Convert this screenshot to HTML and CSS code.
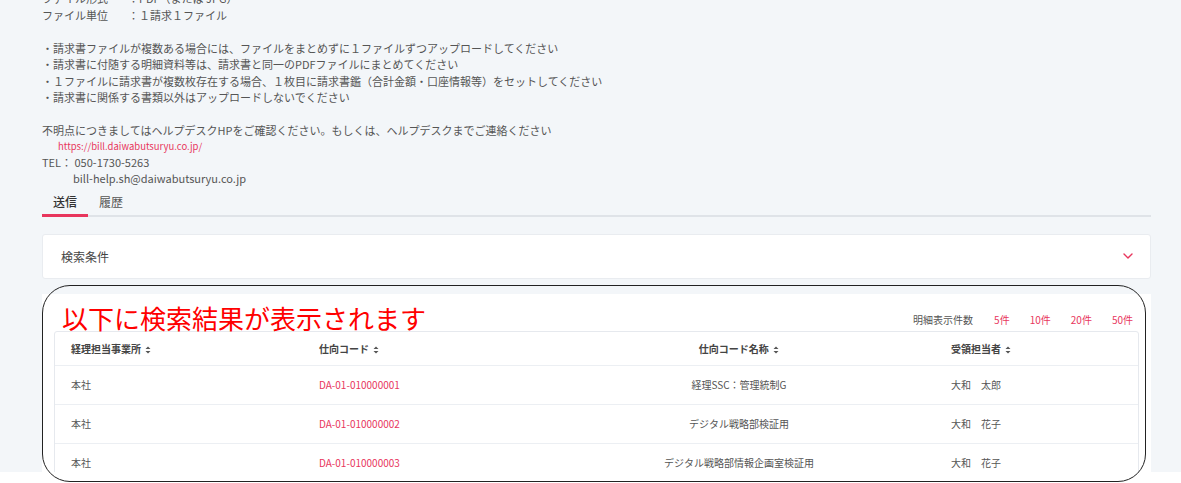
FILE: index.html
```html
<!DOCTYPE html>
<html lang="ja">
<head>
    <meta charset="UTF-8">
    <meta name="viewport" content="width=device-width, initial-scale=1.0">
    <title>請求書アップロード</title>
    <link rel="stylesheet" href="styles.css">
</head>
<body>
    <div class="page">
        <div class="content">
            <!-- Upload notes -->
            <div class="info">
                <div><span class="label">ファイル形式</span>：PDF（または JPG）</div>
                <div><span class="label">ファイル単位</span>：１請求１ファイル</div>
                <div class="blank"></div>
                <div>・請求書ファイルが複数ある場合には、ファイルをまとめずに１ファイルずつアップロードしてください</div>
                <div>・請求書に付随する明細資料等は、請求書と同一のPDFファイルにまとめてください</div>
                <div>・１ファイルに請求書が複数枚存在する場合、１枚目に請求書鑑（合計金額・口座情報等）をセットしてください</div>
                <div>・請求書に関係する書類以外はアップロードしないでください</div>
                <div class="blank"></div>
                <div>不明点につきましてはヘルプデスクHPをご確認ください。もしくは、ヘルプデスクまでご連絡ください</div>
                <div class="url">https://bill.daiwabutsuryu.co.jp/</div>
                <div class="tel">TEL： 050-1730-5263</div>
                <div class="mail">bill-help.sh@daiwabutsuryu.co.jp</div>
            </div>

            <!-- Tabs -->
            <div class="tabs">
                <div class="tab active">送信</div>
                <div class="tab">履歴</div>
            </div>

            <!-- Search conditions -->
            <div class="search-card">
                <span>検索条件</span>
                <svg class="chevron" width="10" height="6" viewBox="0 0 10 6"><path d="M1 1 L5 5 L9 1" fill="none" stroke="#e8365d" stroke-width="1.4" stroke-linecap="round" stroke-linejoin="round"/></svg>
            </div>

            <!-- Results -->
            <div class="results">
                <div class="results-top">
                    <div class="note">以下に検索結果が表示されます</div>
                    <div class="page-size">
                        <span class="ps-label">明細表示件数</span>
                        <span class="ps-opt">5件</span>
                        <span class="ps-opt">10件</span>
                        <span class="ps-opt">20件</span>
                        <span class="ps-opt">50件</span>
                    </div>
                </div>
                <div class="table">
                    <div class="row head">
                        <div class="cell c1">経理担当事業所 <svg class="sort" width="6" height="8" viewBox="0 0 6 8"><path d="M3 0.5 L5.5 3 H0.5 Z M3 7.5 L5.5 5 H0.5 Z" fill="#555"/></svg></div>
                        <div class="cell c2">仕向コード <svg class="sort" width="6" height="8" viewBox="0 0 6 8"><path d="M3 0.5 L5.5 3 H0.5 Z M3 7.5 L5.5 5 H0.5 Z" fill="#555"/></svg></div>
                        <div class="cell c3">仕向コード名称 <svg class="sort" width="6" height="8" viewBox="0 0 6 8"><path d="M3 0.5 L5.5 3 H0.5 Z M3 7.5 L5.5 5 H0.5 Z" fill="#555"/></svg></div>
                        <div class="cell c4">受領担当者 <svg class="sort" width="6" height="8" viewBox="0 0 6 8"><path d="M3 0.5 L5.5 3 H0.5 Z M3 7.5 L5.5 5 H0.5 Z" fill="#555"/></svg></div>
                    </div>
                    <div class="row">
                        <div class="cell c1">本社</div>
                        <div class="cell c2 code">DA-01-010000001</div>
                        <div class="cell c3">経理SSC：管理統制G</div>
                        <div class="cell c4">大和　太郎</div>
                    </div>
                    <div class="row">
                        <div class="cell c1">本社</div>
                        <div class="cell c2 code">DA-01-010000002</div>
                        <div class="cell c3">デジタル戦略部検証用</div>
                        <div class="cell c4">大和　花子</div>
                    </div>
                    <div class="row">
                        <div class="cell c1">本社</div>
                        <div class="cell c2 code">DA-01-010000003</div>
                        <div class="cell c3">デジタル戦略部情報企画室検証用</div>
                        <div class="cell c4">大和　花子</div>
                    </div>
                </div>
            </div>
        </div>
    </div>
    <!-- annotation outline drawn over the results -->
    <div class="annotation"></div>
</body>
</html>
```

FILE: styles.css
```css
body {
    margin: 0;
    padding: 0;
    background: #fff;
    font-family: "Noto Sans CJK JP", "Noto Sans", sans-serif;
    color: #555;
}
.page {
    height: 472px;
    overflow: hidden;
    background: #f3f6f9;
}
.content {
    padding: 0 30px 0 42px;
}
.info {
    margin-top: -10px;
    font-size: 11px;
    line-height: 16.5px;
}
.info .blank {
    height: 16.5px;
}
.info .label {
    display: inline-block;
    width: 86px;
}
.info .url {
    padding-left: 16px;
    font-size: 9.5px;
    line-height: 15px;
    color: #e8365d;
}
.info .tel {
    line-height: 16px;
}
.info .mail {
    padding-left: 31px;
    line-height: 17px;
}
.tabs {
    display: flex;
    margin-top: 3px;
    border-bottom: 2px solid #dfe3e8;
}
.tab {
    padding: 3px 11px 3px;
    font-size: 12px;
    line-height: 18px;
    color: #555;
    margin-bottom: -2px;
    border-bottom: 3px solid transparent;
}
.tab.active {
    color: #333;
    font-weight: 500;
    border-bottom-color: #e8365d;
}
.search-card {
    display: flex;
    justify-content: space-between;
    align-items: center;
    margin-top: 17px;
    height: 45px;
    box-sizing: border-box;
    padding: 0 17px 0 18px;
    background: #fff;
    border: 1px solid #e9ecf0;
    border-radius: 3px;
    font-size: 12px;
    color: #444;
}
.results {
    margin-top: 15px;
    height: 178px;
    background: #fff;
    padding: 0 12px 0 12px;
}
.results-top {
    display: flex;
    justify-content: space-between;
    align-items: flex-end;
    height: 37px;
}
.note {
    padding-left: 8px;
    font-size: 26px;
    line-height: 30px;
    color: #f00;
    margin-bottom: -2px;
}
.page-size {
    display: flex;
    align-items: center;
    gap: 20px;
    font-size: 10px;
    line-height: 14px;
    padding-bottom: 4px;
    padding-right: 6px;
}
.ps-label {
    color: #555;
    margin-right: 1px;
}
.ps-opt {
    color: #e8365d;
}
.table {
    border: 1px solid #e6e9ee;
    border-radius: 3px;
    font-size: 10px;
}
.row {
    display: grid;
    grid-template-columns: 248px 248px 376px 1fr;
    height: 38px;
    align-items: center;
    border-top: 1px solid #eceff3;
}
.row.head {
    height: 33px;
    border-top: none;
    font-weight: 600;
    color: #444;
}
.cell {
    padding-left: 16px;
    white-space: nowrap;
}
.cell.c3 {
    padding-left: 0;
    text-align: center;
}
.cell.c4 {
    padding-left: 24px;
}
.cell.code {
    color: #e8365d;
}
.sort {
    vertical-align: -1px;
    margin-left: 2px;
}
.annotation {
    position: absolute;
    left: 42px;
    top: 285px;
    width: 1104px;
    height: 197px;
    box-sizing: border-box;
    border: 1.5px solid #222;
    border-radius: 28px;
}
```
